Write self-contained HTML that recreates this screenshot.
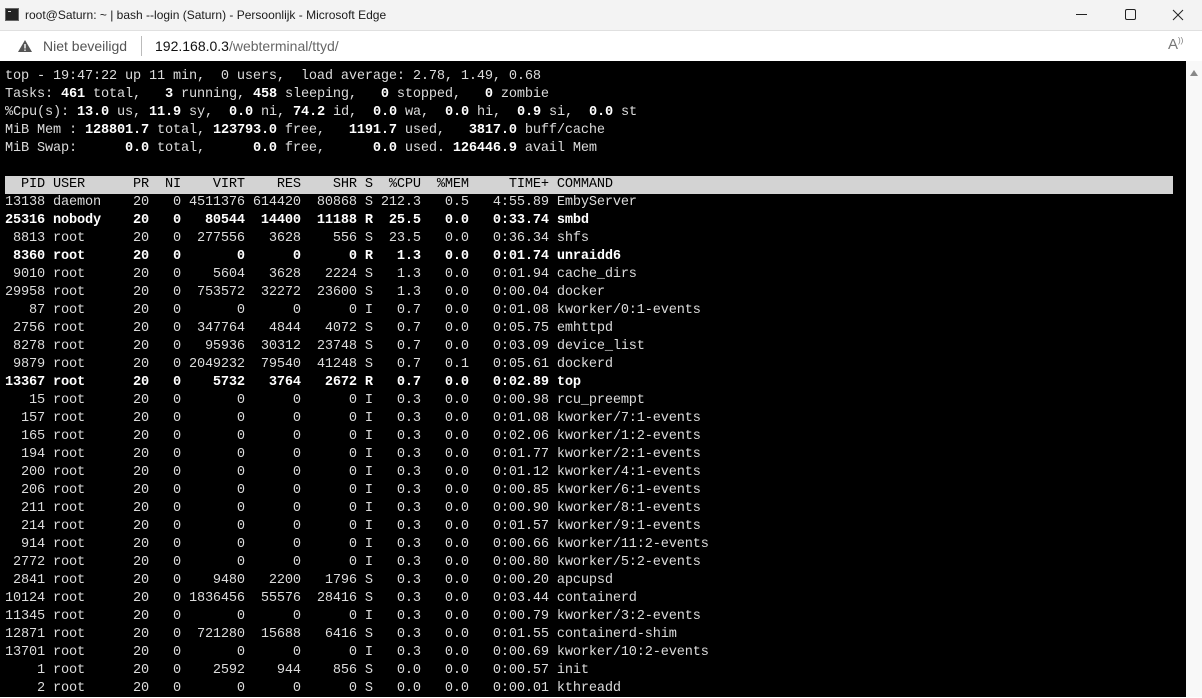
<!DOCTYPE html>
<html><head><meta charset="utf-8"><style>
*{margin:0;padding:0;box-sizing:border-box}
body{width:1202px;height:697px;overflow:hidden;background:#fff;font-family:"Liberation Sans",sans-serif;position:relative}
.title{position:absolute;left:0;top:0;width:1202px;height:30px;background:#f3f3f3;font-size:12px;color:#1a1a1a}
.title .t{position:absolute;left:25px;top:8px}
.ico{position:absolute;left:5px;top:8px;width:14px;height:13px;background:#222;border:1px solid #666}
.ico:after{content:"";position:absolute;left:2px;top:2px;width:3px;height:1px;background:#ddd}
.addr{position:absolute;left:0;top:30px;width:1202px;height:31px;background:#fff;border-top:1px solid #e0e0e0;font-size:14px}
.term{position:absolute;left:0;top:61px;width:1186px;height:636px;background:#000}
.sb{position:absolute;left:1186px;top:61px;width:16px;height:636px;background:#f8f8f8}
pre{position:absolute;left:5px;top:68px;font-family:"Liberation Mono",monospace;font-size:13.6px;letter-spacing:-0.16px;line-height:18px;color:#dcdcdc;white-space:pre}
b{color:#fff;font-weight:bold}
.hl{background:#d3d3d3;color:#000;display:inline-block;width:1168px}
</style></head><body>
<div class="title"><div class="ico"></div><div class="t">root@Saturn: ~ | bash --login (Saturn) - Persoonlijk - Microsoft Edge</div>
<svg style="position:absolute;left:1076px;top:14px" width="12" height="2"><rect width="11" height="1" fill="#222"/></svg>
<svg style="position:absolute;left:1125px;top:9px" width="12" height="12"><rect x="0.5" y="0.5" width="10" height="10" rx="1.5" fill="none" stroke="#222"/></svg>
<svg style="position:absolute;left:1172px;top:9px" width="12" height="12"><path d="M1 1L11 11M11 1L1 11" stroke="#222" stroke-width="1"/></svg>
</div>
<div class="addr">
<svg style="position:absolute;left:17px;top:8px" width="16" height="14"><path d="M8 1L15 13H1Z" fill="#555"/><rect x="7.3" y="5" width="1.4" height="4.5" fill="#fff"/><rect x="7.3" y="10.5" width="1.4" height="1.4" fill="#fff"/></svg>
<span style="position:absolute;left:43px;top:7px;color:#555">Niet beveiligd</span>
<span style="position:absolute;left:141px;top:5px;width:1px;height:20px;background:#bbb"></span>
<span style="position:absolute;left:155px;top:7px;color:#111">192.168.0.3<span style="color:#666">/webterminal/ttyd/</span></span>
<span style="position:absolute;left:1168px;top:5px;color:#777;font-size:15px">A<sup style="font-size:8px">))</sup></span>
</div>
<div class="term"></div>
<div class="sb"><svg style="position:absolute;left:3px;top:8px" width="10" height="8"><path d="M5 1L9 7H1Z" fill="#888"/></svg></div>
<pre>top - 19:47:22 up 11 min,  0 users,  load average: 2.78, 1.49, 0.68
Tasks: <b>461</b> total,   <b>3</b> running, <b>458</b> sleeping,   <b>0</b> stopped,   <b>0</b> zombie
%Cpu(s): <b>13.0</b> us, <b>11.9</b> sy,  <b>0.0</b> ni, <b>74.2</b> id,  <b>0.0</b> wa,  <b>0.0</b> hi,  <b>0.9</b> si,  <b>0.0</b> st
MiB Mem : <b>128801.7</b> total, <b>123793.0</b> free,   <b>1191.7</b> used,   <b>3817.0</b> buff/cache
MiB Swap:      <b>0.0</b> total,      <b>0.0</b> free,      <b>0.0</b> used. <b>126446.9</b> avail Mem

<span class="hl">  PID USER      PR  NI    VIRT    RES    SHR S  %CPU  %MEM     TIME+ COMMAND</span>
13138 daemon    20   0 4511376 614420  80868 S 212.3   0.5   4:55.89 EmbyServer
<b>25316 nobody    20   0   80544  14400  11188 R  25.5   0.0   0:33.74 smbd</b>
 8813 root      20   0  277556   3628    556 S  23.5   0.0   0:36.34 shfs
<b> 8360 root      20   0       0      0      0 R   1.3   0.0   0:01.74 unraidd6</b>
 9010 root      20   0    5604   3628   2224 S   1.3   0.0   0:01.94 cache_dirs
29958 root      20   0  753572  32272  23600 S   1.3   0.0   0:00.04 docker
   87 root      20   0       0      0      0 I   0.7   0.0   0:01.08 kworker/0:1-events
 2756 root      20   0  347764   4844   4072 S   0.7   0.0   0:05.75 emhttpd
 8278 root      20   0   95936  30312  23748 S   0.7   0.0   0:03.09 device_list
 9879 root      20   0 2049232  79540  41248 S   0.7   0.1   0:05.61 dockerd
<b>13367 root      20   0    5732   3764   2672 R   0.7   0.0   0:02.89 top</b>
   15 root      20   0       0      0      0 I   0.3   0.0   0:00.98 rcu_preempt
  157 root      20   0       0      0      0 I   0.3   0.0   0:01.08 kworker/7:1-events
  165 root      20   0       0      0      0 I   0.3   0.0   0:02.06 kworker/1:2-events
  194 root      20   0       0      0      0 I   0.3   0.0   0:01.77 kworker/2:1-events
  200 root      20   0       0      0      0 I   0.3   0.0   0:01.12 kworker/4:1-events
  206 root      20   0       0      0      0 I   0.3   0.0   0:00.85 kworker/6:1-events
  211 root      20   0       0      0      0 I   0.3   0.0   0:00.90 kworker/8:1-events
  214 root      20   0       0      0      0 I   0.3   0.0   0:01.57 kworker/9:1-events
  914 root      20   0       0      0      0 I   0.3   0.0   0:00.66 kworker/11:2-events
 2772 root      20   0       0      0      0 I   0.3   0.0   0:00.80 kworker/5:2-events
 2841 root      20   0    9480   2200   1796 S   0.3   0.0   0:00.20 apcupsd
10124 root      20   0 1836456  55576  28416 S   0.3   0.0   0:03.44 containerd
11345 root      20   0       0      0      0 I   0.3   0.0   0:00.79 kworker/3:2-events
12871 root      20   0  721280  15688   6416 S   0.3   0.0   0:01.55 containerd-shim
13701 root      20   0       0      0      0 I   0.3   0.0   0:00.69 kworker/10:2-events
    1 root      20   0    2592    944    856 S   0.0   0.0   0:00.57 init
    2 root      20   0       0      0      0 S   0.0   0.0   0:00.01 kthreadd</pre>
</body></html>
